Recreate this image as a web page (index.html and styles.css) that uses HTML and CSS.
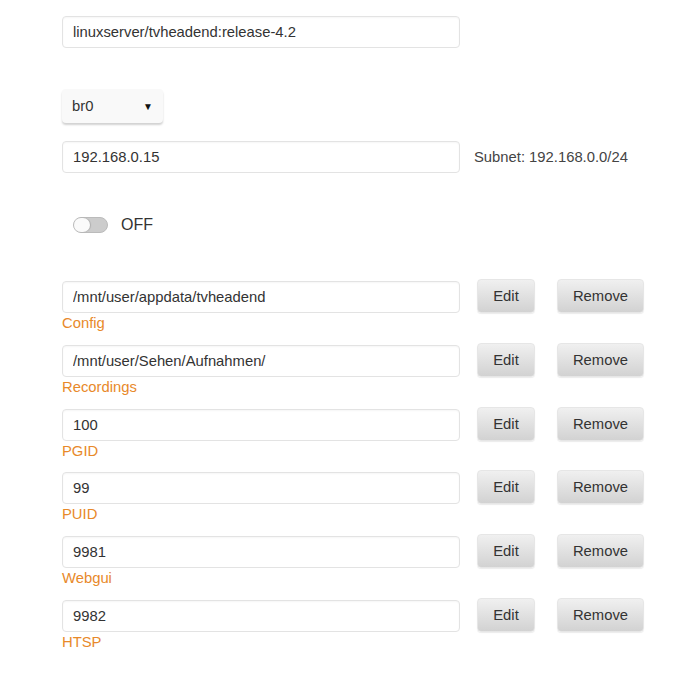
FILE: index.html
```html
<!DOCTYPE html>
<html lang="en">
<head>
    <meta charset="UTF-8">
    <title>Container settings</title>
    <link rel="stylesheet" href="styles.css">
</head>
<body>
    <div class="form">
        <div class="line repo">
            <input class="text" type="text" value="linuxserver/tvheadend:release-4.2">
        </div>

        <div class="line net">
            <div class="select">br0 <span class="caret">&#9660;</span></div>
        </div>

        <div class="line ip">
            <input class="text" type="text" value="192.168.0.15">
            <span class="hint">Subnet: 192.168.0.0/24</span>
        </div>

        <div class="line priv">
            <span class="switch"><span class="knob"></span></span>
            <span class="switch-label">OFF</span>
        </div>

        <div class="configs">
            <div class="config">
                <div class="field">
                    <input class="text" type="text" value="/mnt/user/appdata/tvheadend">
                    <div class="name">Config</div>
                </div>
                <button class="btn edit">Edit</button>
                <button class="btn remove">Remove</button>
            </div>
            <div class="config">
                <div class="field">
                    <input class="text" type="text" value="/mnt/user/Sehen/Aufnahmen/">
                    <div class="name">Recordings</div>
                </div>
                <button class="btn edit">Edit</button>
                <button class="btn remove">Remove</button>
            </div>
            <div class="config">
                <div class="field">
                    <input class="text" type="text" value="100">
                    <div class="name">PGID</div>
                </div>
                <button class="btn edit">Edit</button>
                <button class="btn remove">Remove</button>
            </div>
            <div class="config">
                <div class="field">
                    <input class="text" type="text" value="99">
                    <div class="name">PUID</div>
                </div>
                <button class="btn edit">Edit</button>
                <button class="btn remove">Remove</button>
            </div>
            <div class="config">
                <div class="field">
                    <input class="text" type="text" value="9981">
                    <div class="name">Webgui</div>
                </div>
                <button class="btn edit">Edit</button>
                <button class="btn remove">Remove</button>
            </div>
            <div class="config">
                <div class="field">
                    <input class="text" type="text" value="9982">
                    <div class="name">HTSP</div>
                </div>
                <button class="btn edit">Edit</button>
                <button class="btn remove">Remove</button>
            </div>
        </div>
    </div>
</body>
</html>
```

FILE: styles.css
```css
body {
    margin: 0;
    background: #fff;
    font-family: "Liberation Sans", Arial, sans-serif;
    font-size: 14.8px;
    color: #333;
}
.form {
    padding: 16px 0 0 62px;
}
.line {
    display: flex;
    align-items: center;
}
.text {
    box-sizing: border-box;
    width: 398px;
    height: 32px;
    margin: 0;
    padding: 0 10px;
    border: 1px solid #e3e3e3;
    border-radius: 4px;
    background: #fff;
    font-family: inherit;
    font-size: 14.8px;
    color: #333;
    box-shadow: inset 0 1px 2px rgba(0, 0, 0, 0.04);
}
.net {
    margin-top: 41px;
}
.select {
    box-sizing: border-box;
    width: 101px;
    height: 34px;
    padding: 0 10px;
    display: flex;
    align-items: center;
    justify-content: space-between;
    background: #f9f9f9;
    border-radius: 4px;
    box-shadow: 0 2px 2px rgba(0, 0, 0, 0.18);
    font-size: 14.8px;
}
.caret {
    font-size: 10px;
    color: #111;
}
.ip {
    margin-top: 18px;
}
.hint {
    margin-left: 14px;
    font-size: 14.8px;
    color: #444;
}
.priv {
    margin-top: 43px;
    padding-left: 11px;
}
.switch {
    box-sizing: border-box;
    width: 35px;
    height: 16px;
    border: 1px solid #bbb;
    border-radius: 8px;
    background: #ccc;
    position: relative;
}
.knob {
    position: absolute;
    left: 0;
    top: 0;
    width: 16px;
    height: 14px;
    border-radius: 7px;
    background: #fafafa;
    box-shadow: 1px 0 1px rgba(0, 0, 0, 0.15);
}
.switch-label {
    margin-left: 13px;
    font-size: 16px;
    color: #333;
}
.configs {
    margin-top: 45px;
}
.config {
    display: flex;
    align-items: flex-start;
    height: 63.8px;
}
.field .text {
    margin-top: 2px;
}
.name {
    margin-top: 1px;
    line-height: 18px;
    font-size: 14.8px;
    color: #e8892a;
}
.btn {
    box-sizing: border-box;
    height: 34px;
    padding: 0;
    border: 1px solid #e6e6e6;
    border-radius: 4px;
    background: linear-gradient(#f0f0f0, #d2d2d2);
    box-shadow: 0 1px 1px rgba(0, 0, 0, 0.08);
    font-family: inherit;
    font-size: 14.8px;
    color: #333;
}
.edit {
    width: 58px;
    margin-left: 17px;
}
.remove {
    width: 87px;
    margin-left: 22px;
}
```
